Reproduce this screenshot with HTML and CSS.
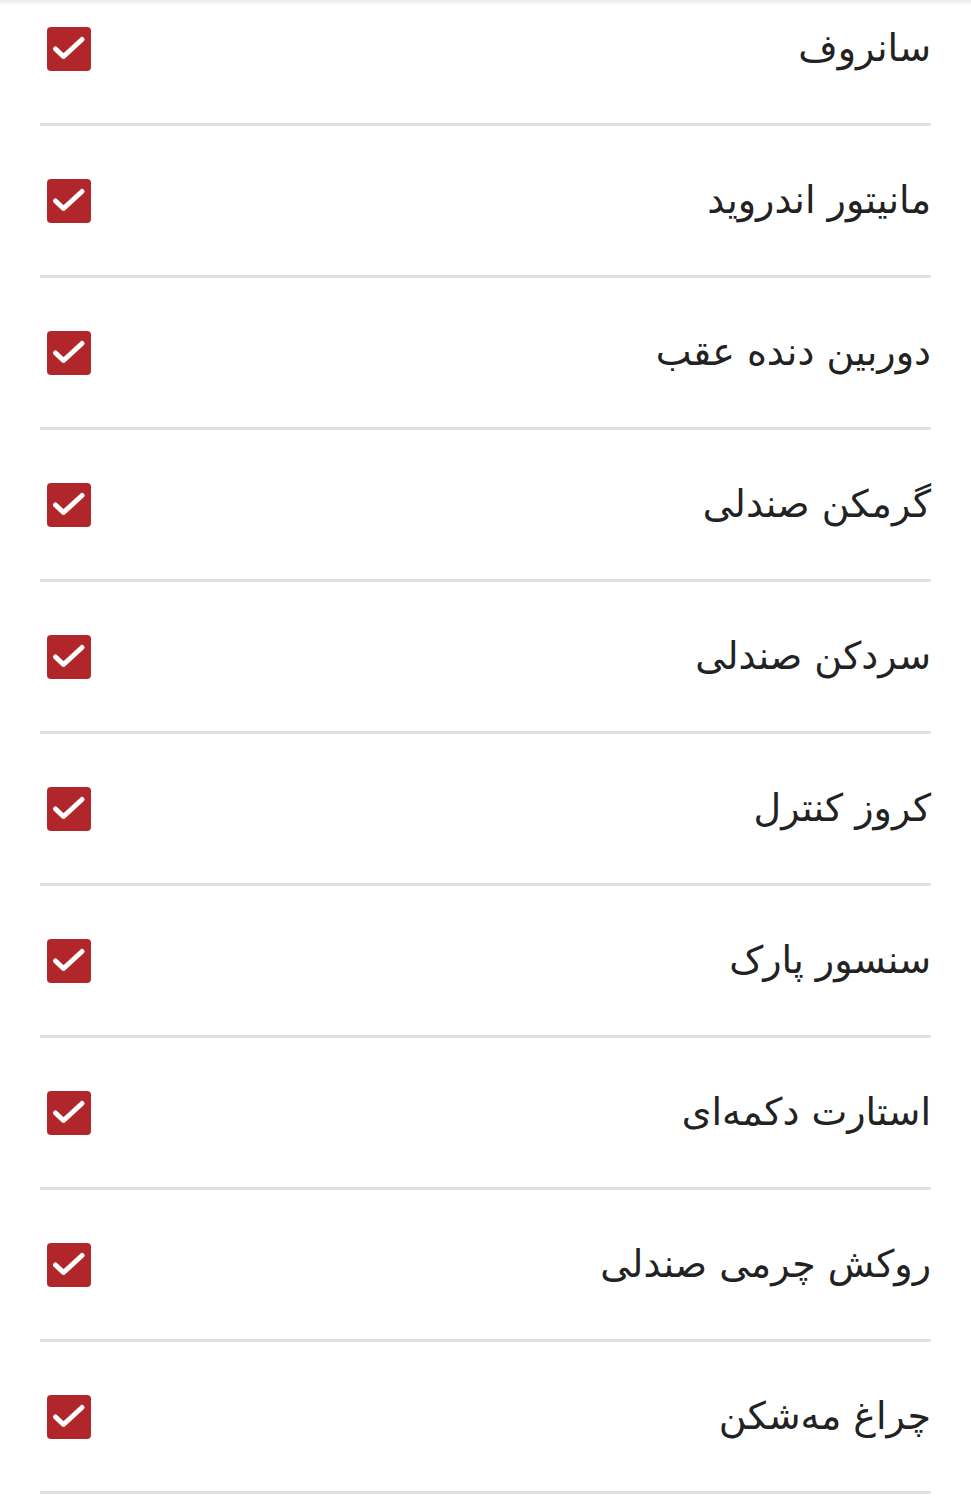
FILE: index.html
```html
<!DOCTYPE html>
<html lang="fa" dir="rtl">
<head>
<meta charset="utf-8">
<link rel="stylesheet" href="styles.css">
</head>
<body>
<div class="topshade"></div>
<ul class="list">
  <li class="row"><span class="label">سانروف</span><span class="check"><svg viewBox="0 0 44 44"><path d="M8.5 22 L16.5 29.5 L35 12.5"/></svg></span></li>
  <li class="row"><span class="label">مانیتور اندروید</span><span class="check"><svg viewBox="0 0 44 44"><path d="M8.5 22 L16.5 29.5 L35 12.5"/></svg></span></li>
  <li class="row"><span class="label">دوربین دنده عقب</span><span class="check"><svg viewBox="0 0 44 44"><path d="M8.5 22 L16.5 29.5 L35 12.5"/></svg></span></li>
  <li class="row"><span class="label">گرمکن صندلی</span><span class="check"><svg viewBox="0 0 44 44"><path d="M8.5 22 L16.5 29.5 L35 12.5"/></svg></span></li>
  <li class="row"><span class="label">سردکن صندلی</span><span class="check"><svg viewBox="0 0 44 44"><path d="M8.5 22 L16.5 29.5 L35 12.5"/></svg></span></li>
  <li class="row"><span class="label">کروز کنترل</span><span class="check"><svg viewBox="0 0 44 44"><path d="M8.5 22 L16.5 29.5 L35 12.5"/></svg></span></li>
  <li class="row"><span class="label">سنسور پارک</span><span class="check"><svg viewBox="0 0 44 44"><path d="M8.5 22 L16.5 29.5 L35 12.5"/></svg></span></li>
  <li class="row"><span class="label">استارت دکمه‌ای</span><span class="check"><svg viewBox="0 0 44 44"><path d="M8.5 22 L16.5 29.5 L35 12.5"/></svg></span></li>
  <li class="row"><span class="label">روکش چرمی صندلی</span><span class="check"><svg viewBox="0 0 44 44"><path d="M8.5 22 L16.5 29.5 L35 12.5"/></svg></span></li>
  <li class="row"><span class="label">چراغ مه‌شکن</span><span class="check"><svg viewBox="0 0 44 44"><path d="M8.5 22 L16.5 29.5 L35 12.5"/></svg></span></li>
</ul>
</body>
</html>
```
FILE: styles.css
```css
html, body {
  margin: 0;
  padding: 0;
  background: #ffffff;
  overflow: hidden;
}
body {
  font-family: "DejaVu Sans", "Noto Sans", sans-serif;
  color: #222222;
}
.topshade {
  position: fixed;
  top: 0;
  left: 0;
  right: 0;
  height: 6px;
  background: linear-gradient(#ececec, rgba(255,255,255,0));
  z-index: 2;
}
.list {
  list-style: none;
  margin: -26px 40px 0 40px;
  padding: 0;
}
.row {
  height: 149px;
  border-bottom: 3px solid #e0e0e0;
  display: flex;
  align-items: center;
  justify-content: space-between;
}
.label {
  font-size: 38px;
  line-height: 1;
  padding-bottom: 2px;
}
.check {
  width: 44px;
  height: 44px;
  margin-left: 7px;
  margin-top: 1px;
  background: #b1262b;
  border-radius: 4px;
  display: flex;
}
.check svg {
  width: 44px;
  height: 44px;
}
.check path {
  fill: none;
  stroke: #ffffff;
  stroke-width: 5;
  stroke-linecap: round;
  stroke-linejoin: round;
}
```
